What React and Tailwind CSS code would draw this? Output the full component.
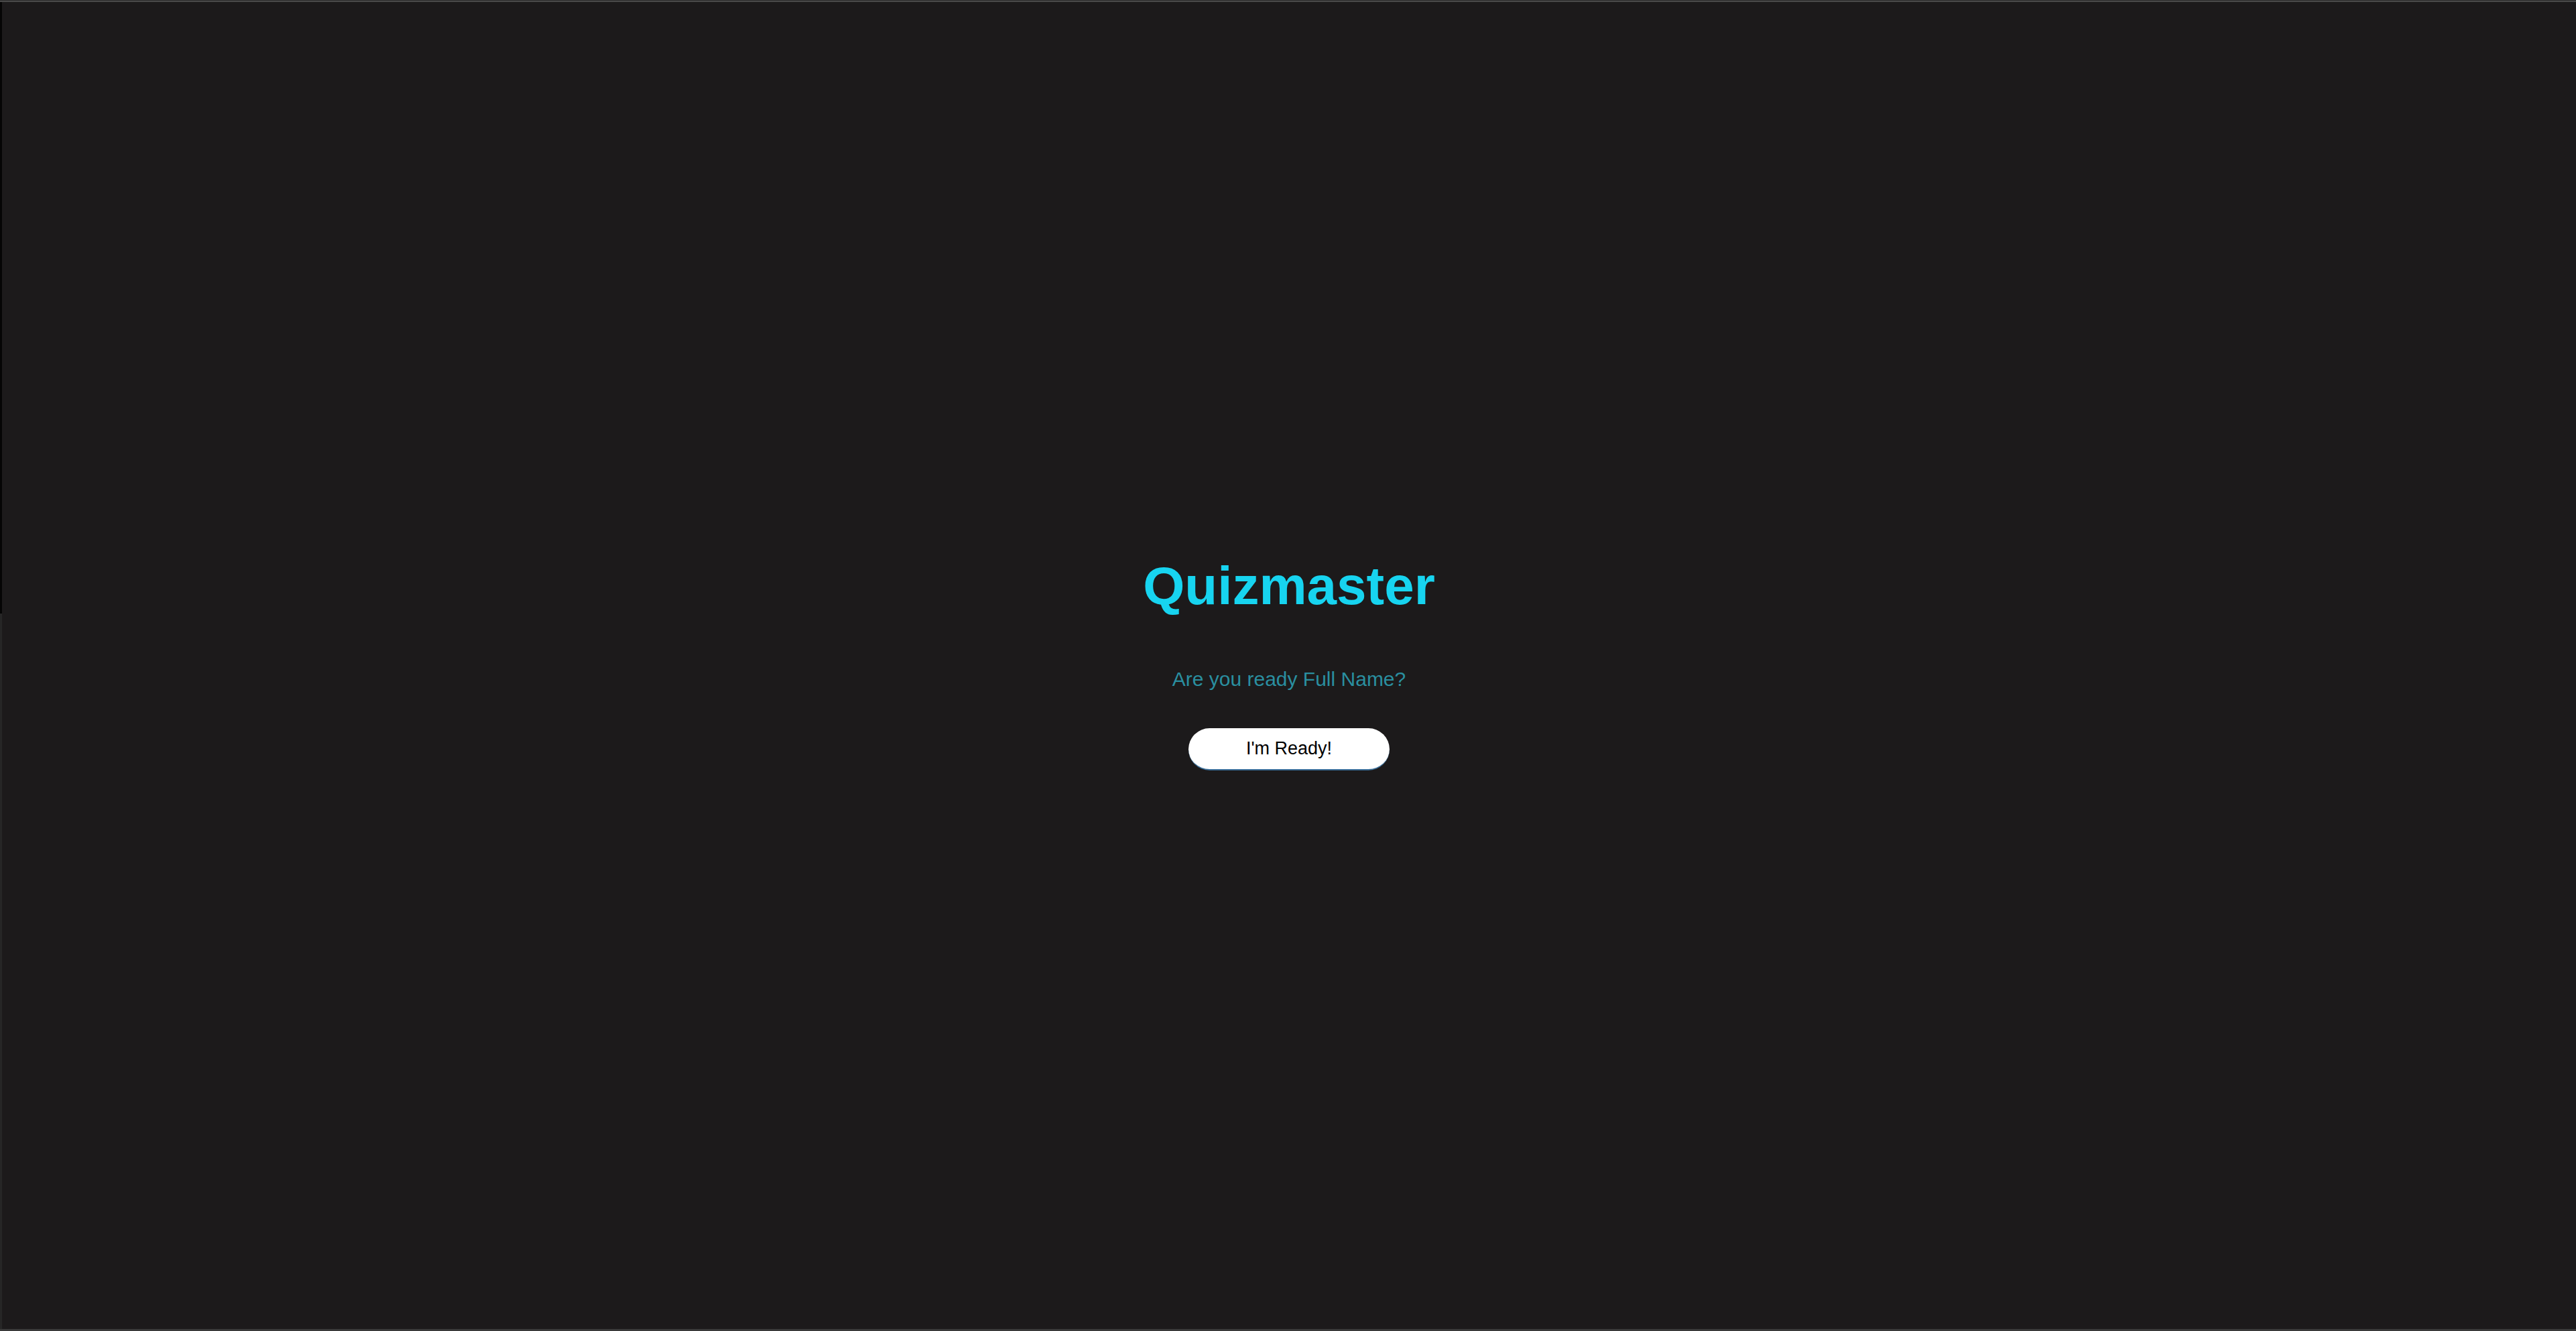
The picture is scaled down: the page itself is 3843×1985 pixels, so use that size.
const App = () => {
    const handleReadyClick = () => {}

    return (
        <div className="w-full h-screen flex flex-col bg-[#1c1a1b] font-['Liberation_Sans',Arial,sans-serif]">
            <div className="h-[1px] bg-[#2a2a2a]"></div>
            <div className="h-[2px] bg-[#4a4a4a]"></div>
            <div className="flex-1 flex flex-row min-h-0">
                <div className="w-[3px] flex flex-col">
                    <div className="h-[912px] bg-[#050505]"></div>
                    <div className="flex-1 bg-[#262626]"></div>
                </div>
                <main className="flex-1 flex flex-col items-center justify-center pb-[8px]">
                    <h1 className="text-[80px] leading-[92px] font-bold text-[#17d4f0]">Quizmaster</h1>
                    <p className="mt-[76px] text-[30px] leading-[34px] text-[#2a8fa0]">Are you ready Full Name?</p>
                    <button
                        onClick={ handleReadyClick }
                        className="mt-[56px] w-[300px] h-[63px] rounded-full bg-white border-b-[2px] border-[#3a6f9a] text-[27px] text-black cursor-pointer"
                    >
                        I'm Ready!
                    </button>
                </main>
            </div>
            <div className="h-[3px] bg-[#3a3a3a]"></div>
        </div>
    )
}

export default App
